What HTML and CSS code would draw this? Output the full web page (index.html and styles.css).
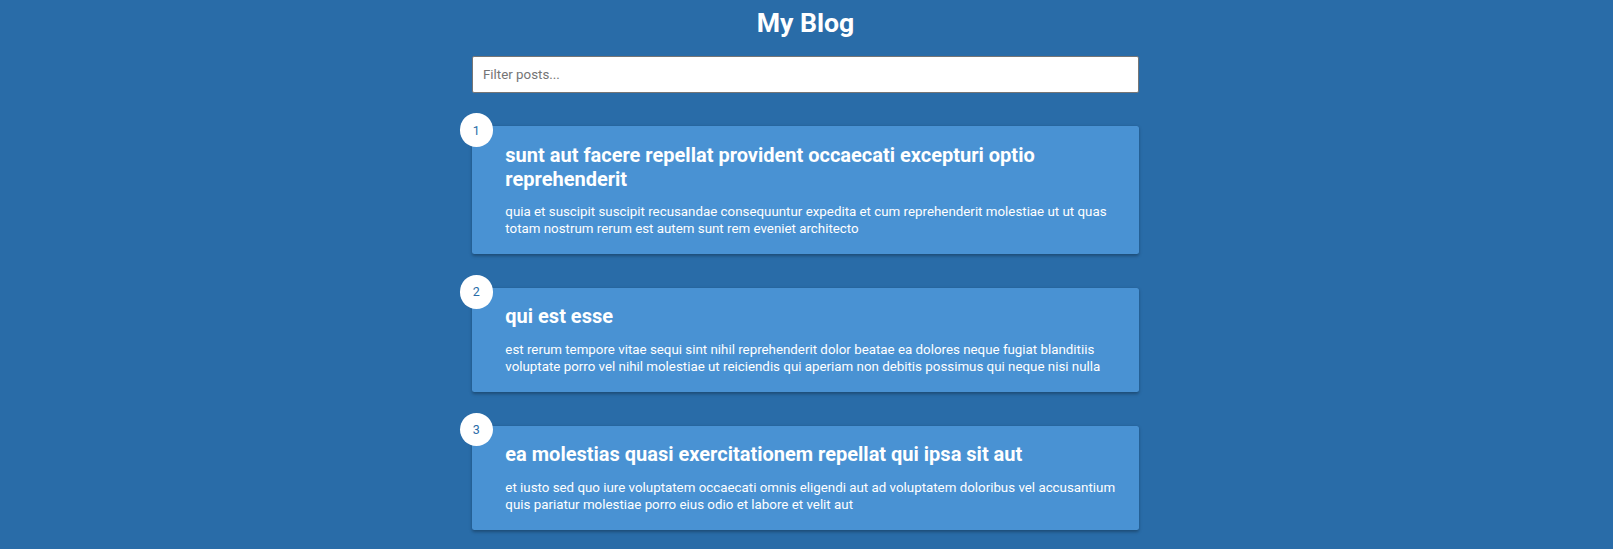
FILE: index.html
```html
<!DOCTYPE html>
<html lang="en">
<head>
<meta charset="UTF-8">
<title>My Blog</title>
<link rel="stylesheet" href="styles.css">
</head>
<body>
<div class="page">
  <h1 class="site-title">My Blog</h1>
  <div class="filter-container">
    <input type="text" class="filter" placeholder="Filter posts...">
  </div>
  <div class="posts">
    <div class="post">
      <div class="number">1</div>
      <div class="post-info">
        <h2 class="post-title">sunt aut facere repellat provident occaecati excepturi optio reprehenderit</h2>
        <p class="post-body">quia et suscipit suscipit recusandae consequuntur expedita et cum reprehenderit molestiae ut ut quas totam nostrum rerum est autem sunt rem eveniet architecto</p>
      </div>
    </div>
    <div class="post">
      <div class="number">2</div>
      <div class="post-info">
        <h2 class="post-title">qui est esse</h2>
        <p class="post-body">est rerum tempore vitae sequi sint nihil reprehenderit dolor beatae ea dolores neque fugiat blanditiis voluptate porro vel nihil molestiae ut reiciendis qui aperiam non debitis possimus qui neque nisi nulla</p>
      </div>
    </div>
    <div class="post">
      <div class="number">3</div>
      <div class="post-info">
        <h2 class="post-title">ea molestias quasi exercitationem repellat qui ipsa sit aut</h2>
        <p class="post-body">et iusto sed quo iure voluptatem occaecati omnis eligendi aut ad voluptatem doloribus vel accusantium quis pariatur molestiae porro eius odio et labore et velit aut</p>
      </div>
    </div>
  </div>
</div>
</body>
</html>
```

FILE: styles.css
```css
* {
  box-sizing: border-box;
}

body {
  margin: 0;
  background-color: #296ca8;
  color: #fff;
  font-family: Roboto, "Liberation Sans", sans-serif;
}

.page {
  display: flex;
  flex-direction: column;
  align-items: center;
  padding-right: 2px;
  padding-bottom: 80px;
}

.site-title {
  margin: 7px 0 0;
  font-size: 26.67px;
  font-weight: 700;
  line-height: normal;
  text-align: center;
}

.filter-container {
  margin-top: 16.67px;
  width: 667px;
}

.filter {
  display: block;
  width: 100%;
  padding: 10px;
  font-family: Roboto, "Liberation Sans", sans-serif;
  font-size: 13.33px;
  line-height: normal;
  color: #222;
  background: #fff;
  border: 1px solid #767676;
  border-radius: 2px;
  outline: none;
}

.filter::placeholder {
  color: #757575;
}

.posts {
  display: flex;
  flex-direction: column;
  gap: 33.33px;
  margin-top: 33.33px;
  width: 667px;
}

.post {
  position: relative;
  display: flex;
  background-color: #4992d3;
  box-shadow: 0 1.67px 3.33px rgba(0, 0, 0, 0.3);
  border-radius: 2.5px;
  padding: 16.67px;
}

.post-info {
  margin-left: 16.67px;
}

.post-title {
  margin: 0;
  font-size: 20px;
  font-weight: 700;
  line-height: normal;
}

.post-body {
  margin: 12.5px 0 0;
  font-size: 13.33px;
  line-height: 1.3;
}

.number {
  position: absolute;
  top: -12.5px;
  left: -12.5px;
  width: 33.33px;
  height: 33.33px;
  border-radius: 50%;
  background: #fff;
  color: #296ca8;
  font-size: 12.5px;
  display: flex;
  align-items: center;
  justify-content: center;
}
```
